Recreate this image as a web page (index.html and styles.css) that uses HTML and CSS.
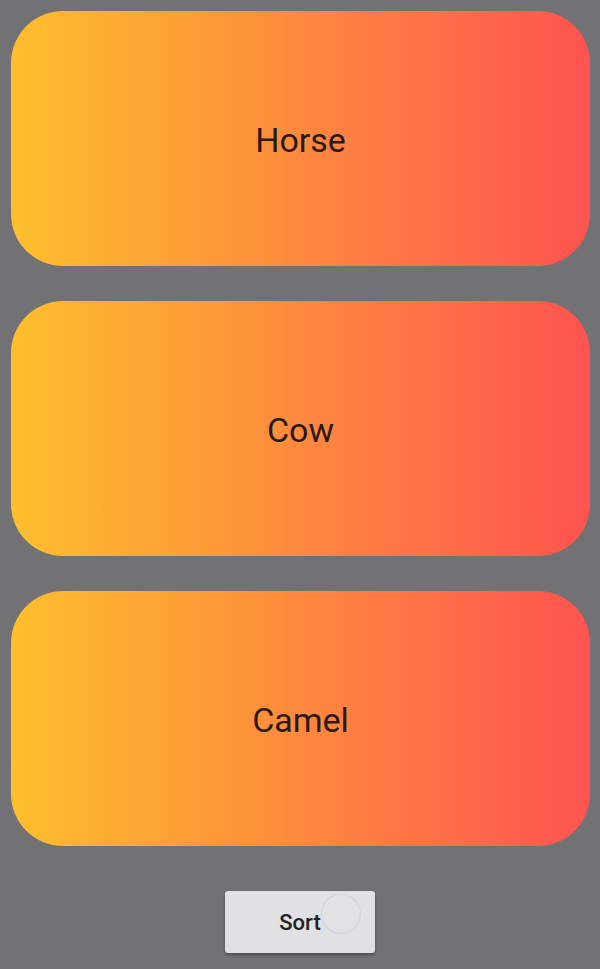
FILE: index.html
```html
<!DOCTYPE html>
<html>
<head>
<meta charset="utf-8">
<link rel="stylesheet" href="styles.css">
</head>
<body>
<div class="page">
  <div class="list">
    <div class="card">Horse</div>
    <div class="card">Cow</div>
    <div class="card">Camel</div>
  </div>
  <div class="actions">
    <button class="sort"><span class="ripple"></span><span class="label">Sort</span></button>
  </div>
</div>
</body>
</html>
```

FILE: styles.css
```css
html, body {
  margin: 0;
  padding: 0;
  background: #727174;
  width: 600px;
  height: 969px;
  overflow: hidden;
}
.page {
  padding: 11px 10px 0 11px;
  font-family: Roboto, "Noto Sans", sans-serif;
}
.list {
  display: flex;
  flex-direction: column;
  gap: 35px;
}
.card {
  height: 255px;
  border-radius: 52px;
  background: linear-gradient(to right, #fdbf2e 0%, #fd9a37 35%, #ff7845 65%, #ff5350 100%);
  display: flex;
  align-items: center;
  justify-content: center;
  font-size: 34px;
  padding-top: 3px;
  box-sizing: border-box;
  color: #2b1a12;
}
.actions {
  display: flex;
  justify-content: center;
  margin-top: 45px;
  padding-right: 1px;
}
.sort {
  position: relative;
  width: 150px;
  height: 62px;
  border: none;
  border-radius: 3px;
  background: #e1e0e3;
  box-shadow: 0 2px 3px rgba(0,0,0,0.35);
  font-family: Roboto, "Noto Sans", sans-serif;
  font-size: 22px;
  font-weight: 500;
  color: #222;
  padding: 0;
}
.label {
  position: relative;
}
.ripple {
  position: absolute;
  left: 96px;
  top: 3px;
  width: 38px;
  height: 38px;
  border-radius: 50%;
  border: 1px solid rgba(205,203,220,0.7);
  background: rgba(228,227,231,0.4);
}
```
